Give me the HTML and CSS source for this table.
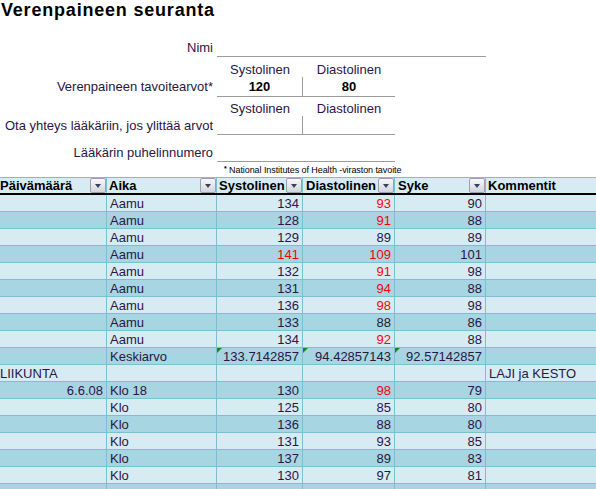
FILE: index.html
```html
<!DOCTYPE html>
<html lang="fi">
<head>
<meta charset="utf-8">
<title>Verenpaineen seuranta</title>
<link rel="stylesheet" href="styles.css">
</head>
<body>
<div class="sheet">
  <h1 class="title">Verenpaineen seuranta</h1>

  <div class="form">
    <div class="frow lined">
      <div class="lbl">Nimi</div>
      <div class="fill span3"></div>
    </div>
    <div class="frow sub gap4">
      <div class="lbl"></div>
      <div class="ctr">Systolinen</div>
      <div class="ctr">Diastolinen</div>
    </div>
    <div class="frow lined">
      <div class="lbl">Verenpaineen tavoitearvot*</div>
      <div class="fill split ctr strong">120</div>
      <div class="fill ctr strong">80</div>
    </div>
    <div class="frow sub gap4">
      <div class="lbl"></div>
      <div class="ctr">Systolinen</div>
      <div class="ctr">Diastolinen</div>
    </div>
    <div class="frow lined">
      <div class="lbl">Ota yhteys lääkäriin, jos ylittää arvot</div>
      <div class="fill split"></div>
      <div class="fill"></div>
    </div>
    <div class="frow lined gap9">
      <div class="lbl">Lääkärin puhelinnumero</div>
      <div class="fill"></div>
      <div class="fill"></div>
    </div>
    <div class="frow note">
      <div class="lbl"></div>
      <div class="notetext"><span class="ast">*</span> National Institutes of Health -viraston tavoite</div>
    </div>
  </div>

  <div class="grid">
    <div class="row head">
      <div class="c"><span class="ht">Päivämäärä</span><span class="dd"></span></div>
      <div class="c"><span class="ht">Aika</span><span class="dd"></span></div>
      <div class="c"><span class="ht">Systolinen</span><span class="dd"></span></div>
      <div class="c"><span class="ht">Diastolinen</span><span class="dd"></span></div>
      <div class="c"><span class="ht">Syke</span><span class="dd"></span></div>
      <div class="c"><span class="ht">Kommentit</span></div>
    </div>

    <div class="row lt"><div class="c"></div><div class="c t">Aamu</div><div class="c n">134</div><div class="c n red">93</div><div class="c n">90</div><div class="c"></div></div>
    <div class="row dk"><div class="c"></div><div class="c t">Aamu</div><div class="c n">128</div><div class="c n red">91</div><div class="c n">88</div><div class="c"></div></div>
    <div class="row lt"><div class="c"></div><div class="c t">Aamu</div><div class="c n">129</div><div class="c n">89</div><div class="c n">89</div><div class="c"></div></div>
    <div class="row dk"><div class="c"></div><div class="c t">Aamu</div><div class="c n red">141</div><div class="c n red">109</div><div class="c n">101</div><div class="c"></div></div>
    <div class="row lt"><div class="c"></div><div class="c t">Aamu</div><div class="c n">132</div><div class="c n red">91</div><div class="c n">98</div><div class="c"></div></div>
    <div class="row dk"><div class="c"></div><div class="c t">Aamu</div><div class="c n">131</div><div class="c n red">94</div><div class="c n">88</div><div class="c"></div></div>
    <div class="row lt"><div class="c"></div><div class="c t">Aamu</div><div class="c n">136</div><div class="c n red">98</div><div class="c n">98</div><div class="c"></div></div>
    <div class="row dk"><div class="c"></div><div class="c t">Aamu</div><div class="c n">133</div><div class="c n">88</div><div class="c n">86</div><div class="c"></div></div>
    <div class="row lt"><div class="c"></div><div class="c t">Aamu</div><div class="c n">134</div><div class="c n red">92</div><div class="c n">88</div><div class="c"></div></div>
    <div class="row dk"><div class="c"></div><div class="c t">Keskiarvo</div><div class="c n flag">133.7142857</div><div class="c n flag">94.42857143</div><div class="c n flag">92.57142857</div><div class="c"></div></div>
    <div class="row lt"><div class="c t0">LIIKUNTA</div><div class="c"></div><div class="c"></div><div class="c"></div><div class="c"></div><div class="c t">LAJI ja KESTO</div></div>
    <div class="row dk"><div class="c n">6.6.08</div><div class="c t">Klo 18</div><div class="c n">130</div><div class="c n red">98</div><div class="c n">79</div><div class="c"></div></div>
    <div class="row lt"><div class="c"></div><div class="c t">Klo</div><div class="c n">125</div><div class="c n">85</div><div class="c n">80</div><div class="c"></div></div>
    <div class="row dk"><div class="c"></div><div class="c t">Klo</div><div class="c n">136</div><div class="c n">88</div><div class="c n">80</div><div class="c"></div></div>
    <div class="row lt"><div class="c"></div><div class="c t">Klo</div><div class="c n">131</div><div class="c n">93</div><div class="c n">85</div><div class="c"></div></div>
    <div class="row dk"><div class="c"></div><div class="c t">Klo</div><div class="c n">137</div><div class="c n">89</div><div class="c n">83</div><div class="c"></div></div>
    <div class="row lt"><div class="c"></div><div class="c t">Klo</div><div class="c n">130</div><div class="c n">97</div><div class="c n">81</div><div class="c"></div></div>
    <div class="row dk"><div class="c"></div><div class="c"></div><div class="c"></div><div class="c"></div><div class="c"></div><div class="c"></div></div>
  </div>
</div>
</body>
</html>
```

FILE: styles.css
```css
html, body {
  margin: 0;
  padding: 0;
  background: #ffffff;
}

body {
  font-family: "Liberation Sans", Arial, sans-serif;
  font-size: 13px;
  color: #2a1545;
  overflow: hidden;
}

.sheet {
  width: 596px;
}

.title {
  margin: 0;
  height: 38px;
  font-size: 18px;
  font-weight: bold;
  letter-spacing: 0.8px;
  line-height: 21px;
  color: #000;
  padding-left: 1px;
}

/* ---------- form block ---------- */
.frow {
  display: grid;
  grid-template-columns: 217px 86px 92px 91px 1fr;
  height: 17px;
  line-height: 19px;
  white-space: nowrap;
}

.frow.lined {
  height: 18px;
}

.frow.gap4 {
  margin-top: 4px;
}

.frow.gap9 {
  margin-top: 9px;
}

.lbl {
  text-align: right;
  padding-right: 4px;
}

.ctr {
  text-align: center;
}

.strong {
  font-weight: bold;
  color: #000;
}

.fill {
  box-sizing: border-box;
  border-bottom: 1px solid #9c9c9c;
}

.fill.span3 {
  grid-column: span 3;
}

.fill.split {
  border-right: 1px solid #9c9c9c;
}

.frow.note {
  height: 16px;
  line-height: 16px;
}

.notetext {
  grid-column: span 4;
  font-size: 9px;
  letter-spacing: -0.08px;
  color: #000;
  padding-left: 7px;
}

.ast {
  font-weight: bold;
  vertical-align: 2px;
  font-size: 7px;
}

/* ---------- spreadsheet table ---------- */
.grid {
  display: flex;
  flex-direction: column;
}

.row {
  display: grid;
  grid-template-columns: 107px 110px 86px 92px 91px 1fr;
  height: 17px;
  box-sizing: border-box;
  border-bottom: 1px solid #7bbfd2;
  line-height: 18px;
  white-space: nowrap;
}

.row.lt {
  background: #d6ecf2;
}

.row.dk {
  background: #a7d5e1;
}

.row.head {
  height: 18px;
  background: #d6ecf2;
  border-top: 1px solid #7bbfd2;
  border-bottom: 2px solid #000;
  line-height: 15px;
}

.c {
  position: relative;
  box-sizing: border-box;
  border-right: 1px solid #7bbfd2;
  overflow: hidden;
  min-width: 0;
}

.c:last-child {
  border-right: 0;
}

.head .c {
  display: flex;
  align-items: stretch;
  justify-content: space-between;
  padding-left: 2px;
  font-weight: bold;
  color: #000;
}

.head .c:first-child {
  padding-left: 0;
}

.head .c:nth-child(4),
.head .c:nth-child(5) {
  padding-left: 3px;
}

.ht {
  flex: 1 1 auto;
  min-width: 0;
  overflow: hidden;
}

.dd {
  flex: none;
  width: 16px;
  height: 15px;
  box-sizing: border-box;
  border: 1px solid #9aa0ae;
  border-radius: 2px;
  background: linear-gradient(#f6f7fa, #d2d6df);
  display: flex;
  align-items: center;
  justify-content: center;
}

.dd::after {
  content: "";
  width: 0;
  height: 0;
  border-left: 3.5px solid transparent;
  border-right: 3.5px solid transparent;
  border-top: 4px solid #37425e;
}

.t {
  padding-left: 3px;
}

.t0 {
  padding-left: 0;
}

.n {
  text-align: right;
  padding-right: 3px;
}

.red {
  color: #ff0000;
}

.flag::before {
  content: "";
  position: absolute;
  left: 0;
  top: 0;
  width: 0;
  height: 0;
  border-top: 5px solid #17892a;
  border-right: 5px solid transparent;
}
```
